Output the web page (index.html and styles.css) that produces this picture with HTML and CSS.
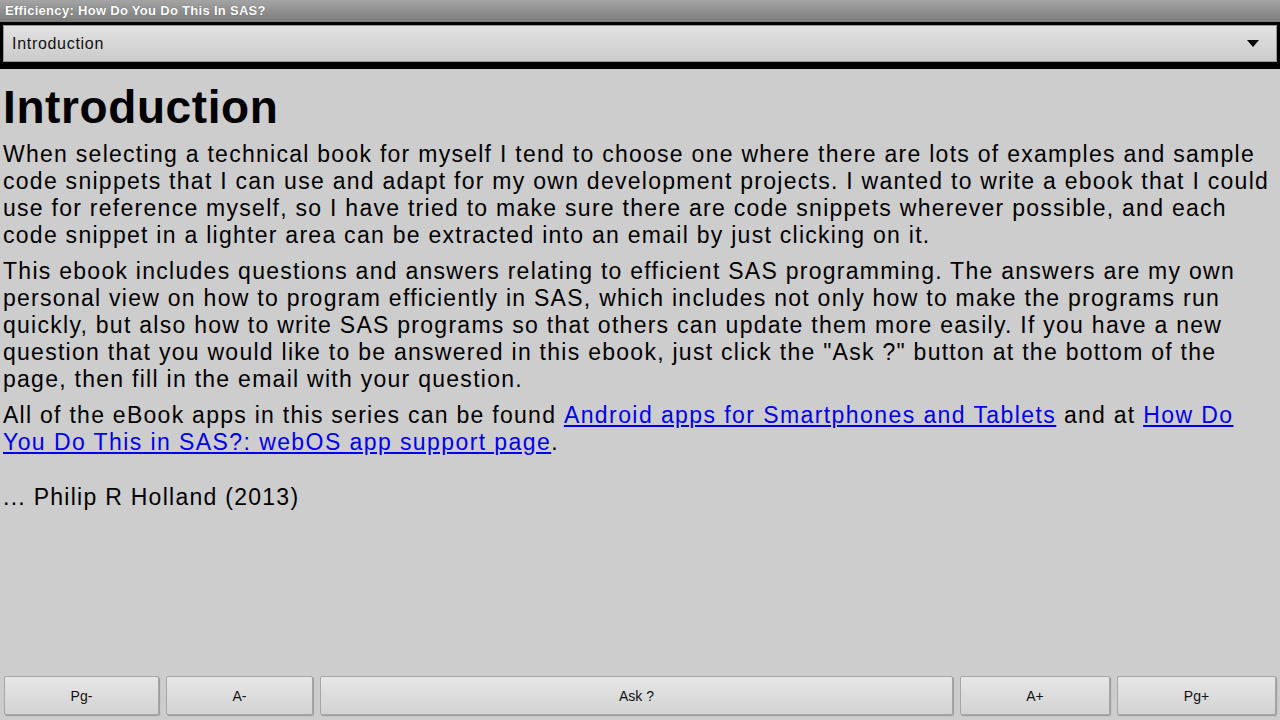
FILE: index.html
```html
<!DOCTYPE html>
<html lang="en">
<head>
  <meta charset="UTF-8">
  <title>Efficiency: How Do You Do This In SAS?</title>
  <link rel="stylesheet" href="styles.css">
</head>
<body>
  <div class="titlebar">Efficiency: How Do You Do This In SAS?</div>
  <div class="selectbar">
    <div class="select">
      <span>Introduction</span>
      <svg class="arrow" width="12" height="7" viewBox="0 0 12 7"><polygon points="0,0 12,0 6,7" fill="#000"/></svg>
    </div>
  </div>
  <div class="content">
    <h1>Introduction</h1>
    <p>When selecting a technical book for myself I tend to choose one where there are lots of examples and sample code snippets that I can use and adapt for my own development projects. I wanted to write a ebook that I could use for reference myself, so I have tried to make sure there are code snippets wherever possible, and each code snippet in a lighter area can be extracted into an email by just clicking on it.</p>
    <p>This ebook includes questions and answers relating to efficient SAS programming. The answers are my own personal view on how to program efficiently in SAS, which includes not only how to make the programs run quickly, but also how to write SAS programs so that others can update them more easily. If you have a new question that you would like to be answered in this ebook, just click the "Ask ?" button at the bottom of the page, then fill in the email with your question.</p>
    <p>All of the eBook apps in this series can be found <a href="#">Android apps for Smartphones and Tablets</a> and at <a href="#">How Do You Do This in SAS?: webOS app support page</a>.</p>
    <p class="sign">... Philip R Holland (2013)</p>
  </div>
  <div class="footer">
    <button class="btn pg-prev">Pg-</button>
    <button class="btn font-down">A-</button>
    <button class="btn ask">Ask ?</button>
    <button class="btn font-up">A+</button>
    <button class="btn pg-next">Pg+</button>
  </div>
</body>
</html>
```

FILE: styles.css
```css
body {
  margin: 0;
  height: 720px;
  display: flex;
  flex-direction: column;
  font-family: "Liberation Sans", Arial, sans-serif;
  background-color: #cdcdcd;
  color: #000;
  overflow: hidden;
}

.titlebar {
  height: 22px;
  line-height: 22px;
  padding-left: 5px;
  font-size: 13px;
  font-weight: bold;
  letter-spacing: 0.3px;
  color: #fff;
  background: linear-gradient(#a4a4a4, #7c7c7c);
  text-shadow: 0 0 1px #555;
}

.selectbar {
  background-color: #000;
  padding: 3px 3px 7px 3px;
}

.select {
  height: 35px;
  display: flex;
  align-items: center;
  justify-content: space-between;
  padding: 0 17px 0 8px;
  border: 1px solid #9a9a9a;
  background: linear-gradient(#e2e2e2, #cbcbcb);
  font-size: 16px;
  letter-spacing: 0.7px;
  color: #111;
}

.content {
  flex: 1;
  padding: 0 3px;
  font-size: 23px;
  line-height: 27px;
  letter-spacing: 1.27px;
}

.content h1 {
  margin: 14px 0 10px 0;
  font-size: 46px;
  line-height: 48px;
  letter-spacing: 0.6px;
}

.content p {
  margin: 0 0 9px 0;
}

.content a {
  color: #0000ee;
  letter-spacing: 1.42px;
}

.content .sign {
  margin-top: 28px;
}

.footer {
  display: flex;
  gap: 7px;
  padding: 0 4px 5px 4px;
}

.btn {
  height: 39px;
  font-family: "Liberation Sans", Arial, sans-serif;
  font-size: 14px;
  color: #111;
  border: 1px solid #a6a6a6;
  border-radius: 2px;
  background: linear-gradient(#e6e6e6, #d3d3d3);
  box-shadow: 1px 1px 1px #9a9a9a;
}

.pg-prev {
  width: 155px;
}

.font-down {
  width: 147px;
}

.ask {
  flex: 1;
}

.font-up {
  width: 150px;
}

.pg-next {
  width: 159px;
}
```
